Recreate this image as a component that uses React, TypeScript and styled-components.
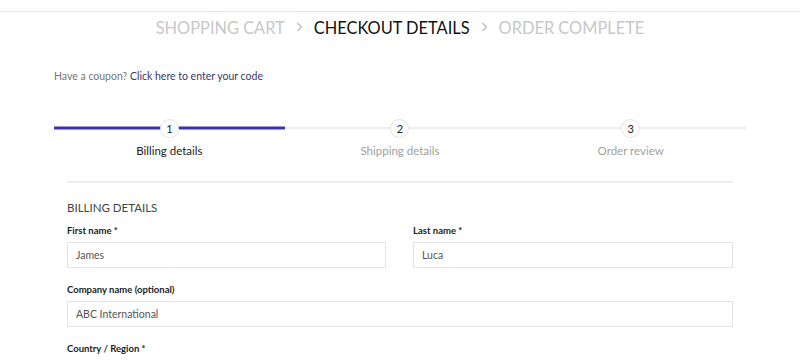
import styled, { createGlobalStyle } from 'styled-components';

const GlobalStyle = createGlobalStyle`
  html, body {
    margin: 0;
    padding: 0;
    background: #fff;
    font-family: Lato, "Liberation Sans", sans-serif;
  }
`;

const Page = styled.div`
  width: 800px;
  height: 362px;
  overflow: hidden;
  padding-top: 11px;
  box-sizing: border-box;
`;

const Breadcrumbs = styled.nav`
  border-top: 1px solid #e6e6e6;
  display: flex;
  justify-content: center;
  align-items: center;
  gap: 11px;
  height: 30px;
  font-size: 16.4px;
`;

const Crumb = styled.span<{ $active?: boolean }>`
  color: ${({ $active }) => ($active ? '#111' : '#c8c8c8')};
  text-transform: uppercase;
`;

const Sep = styled.svg`
  width: 7px;
  height: 10px;
  color: #b8b8b8;
`;

const Coupon = styled.p`
  margin: 27px 0 0 54px;
  font-size: 10.5px;
  color: #777;
  line-height: 14px;

  a {
    color: #3a3768;
    text-decoration: none;
  }
`;

const Stepper = styled.div`
  margin: 34px 0 0 54px;
  width: 692px;
  display: grid;
  grid-template-columns: repeat(3, 1fr);
`;

const Step = styled.div`
  display: flex;
  flex-direction: column;
  align-items: center;
`;

const Track = styled.div<{ $done?: boolean }>`
  position: relative;
  width: 100%;
  height: 22px;
  display: flex;
  align-items: center;
  justify-content: center;

  &::before {
    content: '';
    position: absolute;
    left: 0;
    right: 0;
    top: 50%;
    height: ${({ $done }) => ($done ? '3px' : '2px')};
    transform: translateY(-50%);
    background: ${({ $done }) => ($done ? '#3b33a6' : '#eeeeee')};
  }
`;

const Circle = styled.span`
  position: relative;
  width: 19px;
  height: 19px;
  border-radius: 50%;
  background: #fff;
  border: 1px solid #e4e4e4;
  display: flex;
  align-items: center;
  justify-content: center;
  font-size: 11px;
  color: #222;
  box-sizing: border-box;
`;

const StepLabel = styled.span<{ $active?: boolean }>`
  margin-top: 5px;
  font-size: 11.5px;
  color: ${({ $active }) => ($active ? '#222' : '#a0a0a0')};
`;

const Form = styled.div`
  margin: 24px 0 0 67px;
  width: 666px;
  border-top: 2px solid #ececec;
`;

const SectionTitle = styled.h3`
  margin: 18px 0 0;
  font-size: 11.5px;
  font-weight: 400;
  color: #444;
  text-transform: uppercase;
  line-height: 14px;
`;

const Row = styled.div<{ $cols?: number }>`
  display: grid;
  grid-template-columns: ${({ $cols }) => ($cols === 2 ? '319px 320px' : '1fr')};
  column-gap: 27px;
  margin-top: ${({ $cols }) => ($cols === 2 ? '10px' : '16px')};
`;

const Field = styled.div`
  display: flex;
  flex-direction: column;
`;

const Label = styled.label`
  font-size: 9.5px;
  font-weight: 700;
  color: #222;
  line-height: 12px;
  margin-bottom: 5px;
`;

const Input = styled.div`
  height: 26px;
  border: 1px solid #e4e4e4;
  box-sizing: border-box;
  display: flex;
  align-items: center;
  padding: 0 8px;
  font-size: 10.5px;
  color: #555;
`;

function Chevron() {
  return (
    <Sep viewBox="0 0 7 10" fill="none">
      <path d="M1.5 1l4 4-4 4" stroke="currentColor" strokeWidth="1.1" />
    </Sep>
  );
}

export default function App() {
  return (
    <>
      <GlobalStyle />
      <Page>
        <Breadcrumbs>
          <Crumb>Shopping Cart</Crumb>
          <Chevron />
          <Crumb $active>Checkout Details</Crumb>
          <Chevron />
          <Crumb>Order Complete</Crumb>
        </Breadcrumbs>

        <Coupon>
          Have a coupon? <a href="#">Click here to enter your code</a>
        </Coupon>

        <Stepper>
          <Step>
            <Track $done>
              <Circle>1</Circle>
            </Track>
            <StepLabel $active>Billing details</StepLabel>
          </Step>
          <Step>
            <Track>
              <Circle>2</Circle>
            </Track>
            <StepLabel>Shipping details</StepLabel>
          </Step>
          <Step>
            <Track>
              <Circle>3</Circle>
            </Track>
            <StepLabel>Order review</StepLabel>
          </Step>
        </Stepper>

        <Form>
          <SectionTitle>Billing details</SectionTitle>
          <Row $cols={2}>
            <Field>
              <Label>First name *</Label>
              <Input>James</Input>
            </Field>
            <Field>
              <Label>Last name *</Label>
              <Input>Luca</Input>
            </Field>
          </Row>
          <Row>
            <Field>
              <Label>Company name (optional)</Label>
              <Input>ABC International</Input>
            </Field>
          </Row>
          <Row>
            <Field>
              <Label>Country / Region *</Label>
            </Field>
          </Row>
        </Form>
      </Page>
    </>
  );
}
